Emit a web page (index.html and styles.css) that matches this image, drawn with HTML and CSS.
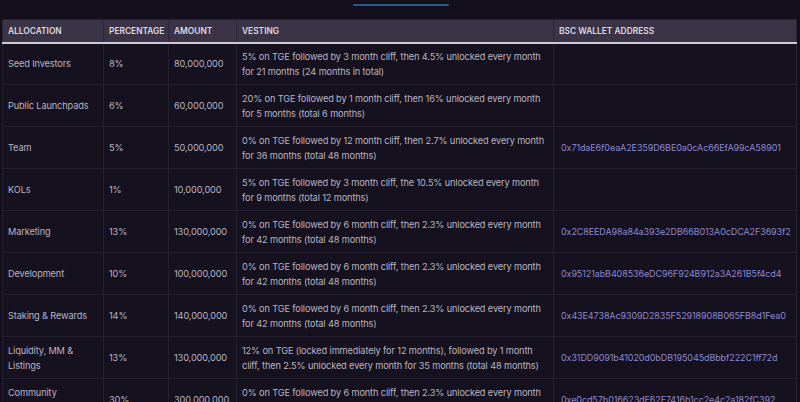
FILE: index.html
```html
<!DOCTYPE html>
<html lang="en">
<head>
<meta charset="utf-8">
<title>Token Allocation</title>
<link rel="stylesheet" href="styles.css">
</head>
<body>
<div class="page">
  <div class="tabs">
    <span class="tab-indicator"></span>
  </div>
  <table class="alloc">
    <colgroup>
      <col class="c-alloc">
      <col class="c-pct">
      <col class="c-amt">
      <col class="c-vest">
      <col class="c-addr">
    </colgroup>
    <thead>
      <tr>
        <th>ALLOCATION</th>
        <th>PERCENTAGE</th>
        <th>AMOUNT</th>
        <th>VESTING</th>
        <th>BSC WALLET ADDRESS</th>
      </tr>
    </thead>
    <tbody>
      <tr>
        <td>Seed Investors</td>
        <td>8%</td>
        <td>80,000,000</td>
        <td>5% on TGE followed by 3 month cliff, then 4.5% unlocked every month for 21 months (24 months in total)</td>
        <td class="addr"></td>
      </tr>
      <tr>
        <td>Public Launchpads</td>
        <td>6%</td>
        <td>60,000,000</td>
        <td>20% on TGE followed by 1 month cliff, then 16% unlocked every month for 5 months (total 6 months)</td>
        <td class="addr"></td>
      </tr>
      <tr>
        <td>Team</td>
        <td>5%</td>
        <td>50,000,000</td>
        <td>0% on TGE followed by 12 month cliff, then 2.7% unlocked every month for 36 months (total 48 months)</td>
        <td class="addr">0x71daE6f0eaA2E359D6BE0a0cAc66EfA99cA58901</td>
      </tr>
      <tr>
        <td>KOLs</td>
        <td>1%</td>
        <td>10,000,000</td>
        <td>5% on TGE followed by 3 month cliff, the 10.5% unlocked every month for 9 months (total 12 months)</td>
        <td class="addr"></td>
      </tr>
      <tr>
        <td>Marketing</td>
        <td>13%</td>
        <td>130,000,000</td>
        <td>0% on TGE followed by 6 month cliff, then 2.3% unlocked every month for 42 months (total 48 months)</td>
        <td class="addr">0x2C8EEDA98a84a393e2DB66B013A0cDCA2F3693f2</td>
      </tr>
      <tr>
        <td>Development</td>
        <td>10%</td>
        <td>100,000,000</td>
        <td>0% on TGE followed by 6 month cliff, then 2.3% unlocked every month for 42 months (total 48 months)</td>
        <td class="addr">0x95121abB408536eDC96F924B912a3A261B5f4cd4</td>
      </tr>
      <tr>
        <td>Staking &amp; Rewards</td>
        <td>14%</td>
        <td>140,000,000</td>
        <td>0% on TGE followed by 6 month cliff, then 2.3% unlocked every month for 42 months (total 48 months)</td>
        <td class="addr">0x43E4738Ac9309D2835F52918908B065FB8d1Fea0</td>
      </tr>
      <tr>
        <td>Liquidity, MM &amp; Listings</td>
        <td>13%</td>
        <td>130,000,000</td>
        <td>12% on TGE (locked immediately for 12 months), followed by 1 month cliff, then 2.5% unlocked every month for 35 months (total 48 months)</td>
        <td class="addr">0x31DD9091b41020d0bDB195045dBbbf222C1ff72d</td>
      </tr>
      <tr>
        <td>Community Incentives</td>
        <td>30%</td>
        <td>300,000,000</td>
        <td>0% on TGE followed by 6 month cliff, then 2.3% unlocked every month for 42 months (total 48 months)</td>
        <td class="addr">0xe0cd57b016623dE62F7416b1cc2e4c2a182fC392</td>
      </tr>
    </tbody>
  </table>
</div>
</body>
</html>
```

FILE: styles.css
```css
* {
  box-sizing: border-box;
}

html, body {
  margin: 0;
  padding: 0;
  background: #130f1d;
  overflow: hidden;
}

.page {
  padding: 0 4px 0 2px;
  font-family: Inter, "Noto Sans", sans-serif;
}

.tabs {
  height: 19px;
  position: relative;
}

.tab-indicator {
  position: absolute;
  left: 351px;
  top: 4px;
  width: 96px;
  height: 2px;
  background: #2b5a86;
  border-radius: 1px;
}

.alloc {
  width: 794px;
  table-layout: fixed;
  border-collapse: collapse;
  background: #15111f;
  border: 1px solid #262130;
}

.c-alloc { width: 101px; }
.c-pct { width: 65px; }
.c-amt { width: 68px; }
.c-vest { width: 317px; }
.c-addr { width: 243px; }

.alloc th {
  background: #3b3447;
  color: #dcd8e4;
  font-size: 8.4px;
  font-weight: 600;
  text-align: left;
  height: 23px;
  padding: 0 5px;
  border-left: 1px solid #2c2738;
  border-bottom: 2px solid #cfcbd6;
  white-space: nowrap;
}

.alloc td {
  color: #b9b5c2;
  font-size: 9.2px;
  letter-spacing: -0.12px;
  line-height: 15px;
  height: 42px;
  padding: 0 4px 0 5px;
  border-left: 1px solid #252030;
  border-top: 1px solid #252030;
  vertical-align: middle;
}

.alloc td.addr {
  color: #8d88cf;
  font-size: 9px;
  letter-spacing: -0.1px;
  padding-left: 7px;
  white-space: nowrap;
}
```
